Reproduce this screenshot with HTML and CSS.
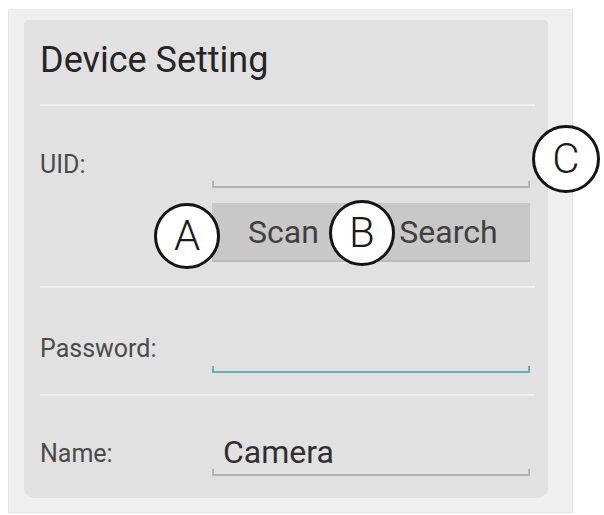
FILE: index.html
```html
<!DOCTYPE html>
<html>
<head>
<meta charset="utf-8">
<link rel="stylesheet" href="styles.css">
</head>
<body>
<div class="frame">
  <div class="panel">
    <h1 class="title">Device Setting</h1>
    <div class="sep"></div>
    <section class="group uid">
      <div class="row">
        <span class="label">UID:</span>
        <div class="input gray tall-36"></div>
      </div>
      <div class="buttons">
        <div class="btn btn-scan">Scan</div>
        <div class="btn btn-search">Search</div>
      </div>
    </section>
    <div class="sep"></div>
    <section class="group pw">
      <div class="row">
        <span class="label">Password:</span>
        <div class="input teal tall-37"></div>
      </div>
    </section>
    <div class="sep"></div>
    <section class="group name">
      <div class="row">
        <span class="label">Name:</span>
        <div class="input gray name-input">Camera</div>
      </div>
    </section>
  </div>
</div>
<div class="badge badge-a">A</div>
<div class="badge badge-b">B</div>
<div class="badge badge-c">C</div>
</body>
</html>
```
FILE: styles.css
```css
html, body {
  margin: 0;
  padding: 0;
  background: #ffffff;
}
body {
  width: 604px;
  height: 515px;
  overflow: hidden;
  font-family: Roboto, "Liberation Sans", Arial, sans-serif;
}
.frame {
  box-sizing: border-box;
  margin: 9px 0 0 8px;
  width: 565px;
  height: 504px;
  background: #efefef;
  border: 1px solid #e6e6e6;
  padding: 10px 24px 14px 15px;
}
.panel {
  box-sizing: border-box;
  width: 524px;
  height: 478px;
  background: #e1e1e1;
  border-radius: 4px 4px 10px 10px;
  padding: 0 13px 0 16px;
  display: flex;
  flex-direction: column;
}
.title {
  box-sizing: border-box;
  margin: 0;
  height: 84px;
  padding-top: 22px;
  font-size: 36px;
  line-height: 36px;
  font-weight: 400;
  color: #252525;
}
.sep {
  height: 2px;
  background: #efefef;
  flex: none;
}
.group {
  box-sizing: border-box;
  flex: none;
}
.uid { height: 180px; padding-top: 46px; }
.pw { height: 106px; padding-top: 48px; }
.name { height: 102px; padding-top: 45px; }
.row {
  display: grid;
  grid-template-columns: 172px 318px;
  align-items: start;
}
.label {
  font-size: 25px;
  line-height: 25px;
  color: #4a4a4a;
}
.input {
  box-sizing: border-box;
  border-bottom: 2px solid var(--c);
  background:
    linear-gradient(var(--c), var(--c)) left bottom / 2px 5px no-repeat,
    linear-gradient(var(--c), var(--c)) right bottom / 2px 5px no-repeat;
}
.gray { --c: #b3b3b3; }
.teal { --c: #62b3b4; }
.tall-36 { height: 36px; }
.tall-37 { height: 37px; }
.name-input {
  height: 40px;
  margin-top: -5px;
  padding-left: 11px;
  font-size: 32px;
  line-height: 32px;
  color: #303030;
}
.buttons {
  display: flex;
  margin: 15px 0 0 172px;
  width: 318px;
  height: 59px;
}
.btn {
  box-sizing: border-box;
  flex: 1;
  display: flex;
  align-items: center;
  justify-content: center;
  background: #c8c8c8;
  border-bottom: 2px solid #bababa;
  font-size: 32px;
  color: #404040;
}
.btn-scan { padding-right: 22px; }
.btn-search { padding-right: 10px; }
.badge {
  position: absolute;
  box-sizing: border-box;
  width: 66px;
  height: 66px;
  border: 3px solid #141414;
  border-radius: 50%;
  background: #ffffff;
  display: flex;
  align-items: center;
  justify-content: center;
  font-size: 42px;
  line-height: 42px;
  font-weight: 300;
  color: #1a1a1a;
}
.badge-a { left: 154px; top: 203px; }
.badge-b { left: 329px; top: 200px; }
.badge-c { left: 532px; top: 125px; width: 68px; height: 68px; }
```
